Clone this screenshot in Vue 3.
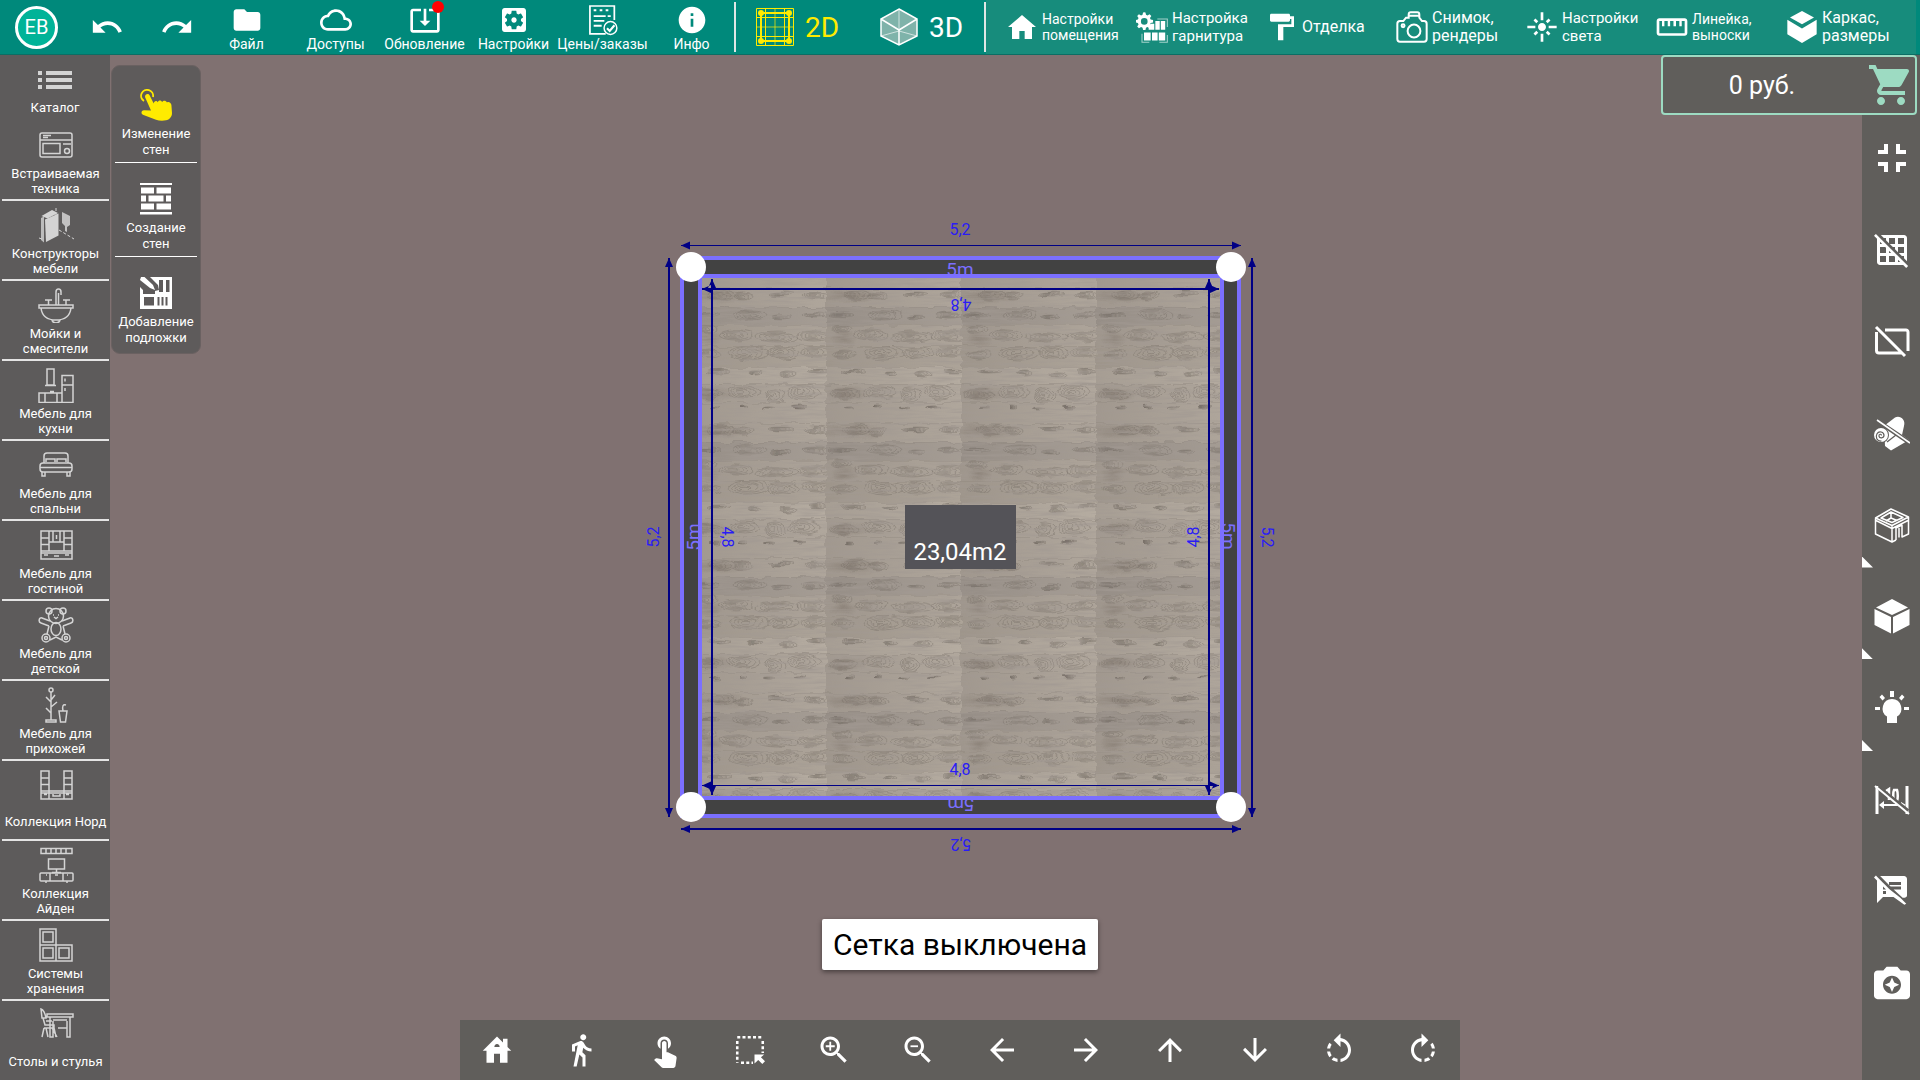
<script setup>
import { ref } from 'vue'

const fileActions = [
  { icon: 'folder', label: 'Файл' },
  { icon: 'cloud', label: 'Доступы' },
  { icon: 'update', label: 'Обновление', badge: true },
  { icon: 'settings', label: 'Настройки' },
  { icon: 'prices', label: 'Цены/заказы' },
  { icon: 'info', label: 'Инфо' },
]

const sections = [
  { icon: 'home', lines: ['Настройки', 'помещения'], size: 'small' },
  { icon: 'kitchenSet', lines: ['Настройка', 'гарнитура'], size: 'medium' },
  { icon: 'roller', lines: ['Отделка'], size: 'large' },
  { icon: 'camera', lines: ['Снимок,', 'рендеры'], size: 'large' },
  { icon: 'flare', lines: ['Настройки', 'света'], size: 'medium' },
  { icon: 'ruler', lines: ['Линейка,', 'выноски'], size: 'small' },
  { icon: 'carcass', lines: ['Каркас,', 'размеры'], size: 'large' },
]

const catalog = [
  { icon: 'oven', lines: ['Встраиваемая', 'техника'] },
  { icon: 'constructor', lines: ['Конструкторы', 'мебели'] },
  { icon: 'sink', lines: ['Мойки и', 'смесители'] },
  { icon: 'kitchen', lines: ['Мебель для', 'кухни'] },
  { icon: 'bed', lines: ['Мебель для', 'спальни'] },
  { icon: 'living', lines: ['Мебель для', 'гостиной'] },
  { icon: 'bear', lines: ['Мебель для', 'детской'] },
  { icon: 'hall', lines: ['Мебель для', 'прихожей'] },
  { icon: 'nord', lines: ['Коллекция Норд'] },
  { icon: 'aiden', lines: ['Коллекция', 'Айден'] },
  { icon: 'storage', lines: ['Системы', 'хранения'] },
  { icon: 'tables', lines: ['Столы и стулья'] },
]

const wallTools = [
  { icon: 'pointer', lines: ['Изменение', 'стен'], active: true },
  { icon: 'bricks', lines: ['Создание', 'стен'] },
  { icon: 'underlay', lines: ['Добавление', 'подложки'] },
]

const viewTools = [
  { icon: 'exitFull', label: 'Выйти из полного экрана' },
  { icon: 'gridOff', label: 'Сетка' },
  { icon: 'wallOff', label: 'Стены' },
  { icon: 'coverOff', label: 'Покрытия' },
  { icon: 'room', label: 'Комната', more: true },
  { icon: 'cube', label: 'Объекты', more: true },
  { icon: 'bulb', label: 'Свет', more: true },
  { icon: 'sizesOff', label: 'Размеры' },
  { icon: 'notesOff', label: 'Подписи' },
  { icon: 'photo', label: 'Фото' },
]

const moveTools = [
  { icon: 'house', label: 'Домой' },
  { icon: 'walk', label: 'Прогулка' },
  { icon: 'touch', label: 'Касание' },
  { icon: 'select', label: 'Выделение' },
  { icon: 'zoomIn', label: 'Приблизить' },
  { icon: 'zoomOut', label: 'Отдалить' },
  { icon: 'left', label: 'Влево' },
  { icon: 'right', label: 'Вправо' },
  { icon: 'up', label: 'Вверх' },
  { icon: 'down', label: 'Вниз' },
  { icon: 'rotateLeft', label: 'Повернуть влево' },
  { icon: 'rotateRight', label: 'Повернуть вправо' },
]

const mode = ref('2D')

const magnifier = '<path d="M15.5 14h-.79l-.28-.27C15.41 12.59 16 11.11 16 9.5 16 5.91 13.09 3 9.5 3S3 5.91 3 9.5 5.91 16 9.5 16c1.61 0 3.09-.59 4.23-1.57l.27.28v.79l5 4.99L20.49 19l-4.99-5zm-6 0C7.01 14 5 11.99 5 9.5S7.01 5 9.5 5 14 7.01 14 9.5 11.99 14 9.5 14z"/>'
const touchHand = '<path d="M9 11.24V7.5C9 6.12 10.12 5 11.5 5S14 6.12 14 7.5v3.74c1.21-.81 2-2.18 2-3.74C16 5.01 13.99 3 11.5 3S7 5.01 7 7.5c0 1.56.79 2.93 2 3.74z"/><path d="M18.84 15.87l-4.54-2.26c-.17-.07-.35-.11-.54-.11H13v-6c0-.83-.67-1.5-1.5-1.5S10 6.67 10 7.5v10.74l-3.43-.72c-.08-.01-.15-.03-.24-.03-.31 0-.59.13-.79.33l-.79.8 4.94 4.94c.27.27.65.44 1.06.44h6.79c.75 0 1.33-.55 1.44-1.28l.75-5.27c.01-.07.02-.14.02-.2 0-.62-.38-1.16-.91-1.38z"/>'

// Filled glyphs on a 24-unit grid
const glyphs = {
  undo: '<path d="M12.5 8c-2.65 0-5.05.99-6.9 2.6L2 7v9h9l-3.62-3.62c1.39-1.16 3.16-1.88 5.12-1.88 3.54 0 6.55 2.31 7.6 5.5l2.37-.78C21.08 11.03 17.15 8 12.5 8z"/>',
  redo: '<path d="M18.4 10.6C16.55 8.99 14.15 8 11.5 8c-4.65 0-8.58 3.03-9.96 7.22L3.9 16c1.05-3.19 4.05-5.5 7.6-5.5 1.95 0 3.73.72 5.12 1.88L13 16h9V7l-3.6 3.6z"/>',
  folder: '<path d="M10 4H4c-1.1 0-1.99.9-1.99 2L2 18c0 1.1.9 2 2 2h16c1.1 0 2-.9 2-2V8c0-1.1-.9-2-2-2h-8l-2-2z"/>',
  cloud: '<path d="M19.35 10.04C18.67 6.59 15.64 4 12 4 9.11 4 6.6 5.64 5.35 8.04 2.34 8.36 0 10.91 0 14c0 3.31 2.69 6 6 6h13c2.76 0 5-2.24 5-5 0-2.64-2.05-4.78-4.65-4.96zM19 18H6c-2.21 0-4-1.79-4-4 0-2.05 1.53-3.76 3.56-3.97l1.07-.11.5-.95C8.08 7.14 9.94 6 12 6c2.62 0 4.88 1.86 5.39 4.43l.3 1.5 1.53.11c1.56.1 2.78 1.41 2.78 2.96 0 1.65-1.35 3-3 3z"/>',
  update: '<path d="M12 16.5l4-4h-3v-9h-2v9H8l4 4zm9-13h-6v1.99h6v14.03H3V5.49h6V3.5H3c-1.1 0-2 .9-2 2v14c0 1.1.9 2 2 2h18c1.1 0 2-.9 2-2v-14c0-1.1-.9-2-2-2z"/>',
  settings: '<path d="M12 10c-1.1 0-2 .9-2 2s.9 2 2 2 2-.9 2-2-.9-2-2-2zm7-7H5c-1.11 0-2 .9-2 2v14c0 1.1.89 2 2 2h14c1.11 0 2-.9 2-2V5c0-1.1-.89-2-2-2zm-1.75 9c0 .23-.02.46-.05.68l1.48 1.16c.13.11.17.3.08.45l-1.4 2.42c-.09.15-.27.21-.43.15l-1.74-.7c-.36.28-.76.51-1.18.69l-.26 1.85c-.03.17-.18.3-.35.3h-2.8c-.17 0-.32-.13-.35-.29l-.26-1.85c-.43-.18-.82-.41-1.18-.69l-1.74.7c-.16.06-.34 0-.43-.15l-1.4-2.42c-.09-.15-.05-.34.08-.45l1.48-1.16c-.03-.23-.05-.46-.05-.69 0-.23.02-.46.05-.68l-1.48-1.16c-.13-.11-.17-.3-.08-.45l1.4-2.42c.09-.15.27-.21.43-.15l1.74.7c.36-.28.76-.51 1.18-.69l.26-1.85c.03-.17.18-.3.35-.3h2.8c.17 0 .32.13.35.29l.26 1.85c.43.18.82.41 1.18.69l1.74-.7c.16-.06.34 0 .43.15l1.4 2.42c.09.15.05.34-.08.45l-1.48 1.16c.03.23.05.46.05.69z"/>',
  prices: '<path fill="none" stroke="currentColor" stroke-width="1.3" d="M14 22.4H2.2V1.5h18.3V12"/><path d="M5 4h2v1.4H5zM9.5 4h2v1.4h-2zM14 4h2v1.4h-2zM5 8.4h9v1.4H5zM5 12h8v1.4H5zM5 15.6h6V17H5zM15.5 8.4h2.3v1.4h-2.3z"/><circle cx="17.6" cy="18" r="4.8" fill="none" stroke="currentColor" stroke-width="1.1"/><path fill="none" stroke="currentColor" stroke-width="1.6" d="M15 18.2l2 2 3.6-4.3"/>',
  info: '<path d="M12 2C6.48 2 2 6.48 2 12s4.48 10 10 10 10-4.48 10-10S17.52 2 12 2zm1 15h-2v-6h2v6zm0-8h-2V7h2v2z"/>',
  home: '<path d="M10 21v-6h4v6h5.500v-9H22.500L12 3 1.500 12h3v9z"/>',
  kitchenSet: '<path fill-rule="evenodd" d="M6.2 1l.9.1.4 1.8 1.1.5 1.600-1 1.300 1.300-1 1.600.5 1.100 1.800.4v1.800l-1.800.4-.5 1.100 1 1.600-1.300 1.300-1.600-1-1.100.5-.4 1.800H5.300l-.4-1.800-1.100-.5-1.600 1L.9 11.700l1-1.600L1.400 9-.2 8.600V6.800L1.400 6.400l.5-1.100-1-1.600 1.300-1.300 1.600 1L4.900 2.900 5.300 1.100zM6.200 5.300a2.500 2.500 0 1 0 0 5 2.500 2.500 0 0 0 0-5z"/><path d="M11 9.500h2.700V14H9.500v-2.500zM14.500 7.500h3.300V14h-3.300zM18.600 7.500h3.300V14h-3.300zM6 16.200h5v6H6zM12 16.200h4.200v6H12zM17.100 16.200h4.800v6h-4.800z"/><path opacity=".6" fill="none" stroke="currentColor" stroke-width=".8" d="M16 6h7.500v6M23.500 18v5.500h-6M4.500 17v6.500H10"/>',
  roller: '<path d="M18 4V3c0-.55-.45-1-1-1H4c-.55 0-1 .45-1 1v4c0 .55.45 1 1 1h13c.55 0 1-.45 1-1V6h1v4H9v12h4v-10h8V4h-3z"/>',
  camera: '<g fill="none" stroke="currentColor" stroke-width="1.500"><path d="M3 7.500h2.500l2-2.500h2V2.800C9.500 1.800 10 1 11 1h5c1 0 1.500.8 1.500 1.800V5l2 2.500H21c1.200 0 2 .8 2 2V21c0 1.200-.8 2-2 2H3c-1.200 0-2-.8-2-2V9.500c0-1.200.8-2 2-2zM9.500 3.500h8"/><circle cx="13.500" cy="15" r="4.800"/><circle cx="5.300" cy="11" r="1.100"/></g>',
  flare: '<path d="M7 11H1v2h6v-2zm2.170-3.240L7.050 5.640 5.640 7.050l2.120 2.120 1.410-1.410zM13 1h-2v6h2V1zm5.360 6.050l-1.410-1.410-2.120 2.120 1.410 1.410 2.120-2.120zM17 11v2h6v-2h-6zm-5-2c-1.660 0-3 1.340-3 3s1.340 3 3 3 3-1.340 3-3-1.340-3-3-3zm2.830 7.240l2.120 2.120 1.410-1.410-2.120-2.120-1.410 1.410zm-9.190.71l1.410 1.410 2.120-2.120-1.410-1.410-2.120 2.120zM11 23h2v-6h-2v6z"/>',
  ruler: '<path d="M21.500 5.500h-19c-1.100 0-2 .9-2 2v9c0 1.100.9 2 2 2h19c1.100 0 2-.9 2-2v-9c0-1.100-.9-2-2-2zm0 11.200h-19V7.500h2v4h1.800v-4h2.500v4h1.800v-4h2.500v4H15v-4h2.500v4h1.800v-4h2.200v9.200z"/>',
  carcass: '<path d="M12 0L21 4.800 12 9.900 3 4.800zM1 6.600l11 6.500 11-6.500V17.500L12 24 1 17.500z"/>',
  cart: '<path d="M7 18c-1.100 0-1.990.9-1.990 2S5.900 22 7 22s2-.9 2-2-.9-2-2-2zM1 2v2h2l3.600 7.590-1.350 2.450c-.16.28-.25.61-.25.96 0 1.100.9 2 2 2h12v-2H7.420c-.14 0-.25-.11-.25-.25l.03-.12.9-1.630h7.450c.75 0 1.410-.41 1.750-1.030l3.580-6.490c.08-.14.12-.31.12-.48 0-.55-.45-1-1-1H5.210l-.94-2H1zm16 16c-1.100 0-1.990.9-1.990 2s.89 2 1.990 2 2-.9 2-2-.9-2-2-2z"/>',
  house: '<path fill-rule="evenodd" d="M2.500 12.500L12 3l4 4V4.500h3V10l2.500 2.500H19V20.500h-5v-6h-4v6H5v-8zM12 8a1.700 1.700 0 0 0-1.700 2h3.400A1.700 1.700 0 0 0 12 8z"/>',
  walk: '<path d="M13.500 5.500c1.100 0 2-.9 2-2s-.9-2-2-2-2 .9-2 2 .9 2 2 2zM9.800 8.900L7 23h2.100l1.800-8 2.100 2v6h2v-7.500l-2.100-2 .6-3C14.800 12 16.800 13 19 13v-2c-1.900 0-3.500-1-4.300-2.400l-1-1.600c-.4-.6-1-1-1.700-1-.3 0-.5.1-.8.1L6 8.300V13h2V9.600l1.800-.7"/>',
  touch: touchHand,
  select: '<path fill="none" stroke="currentColor" stroke-width="1.700" stroke-dasharray="2 1.500" d="M3.500 3.500h17.500M20.500 6v8M3.500 6v14.500M6 20.500h8"/><path d="M15 15h6.500l-2.200 1.800 2.700 2.700-1.800 1.800-2.700-2.700L15 21z"/>',
  zoomIn: magnifier + '<path d="M12.500 10.100h-2.400v2.400H8.900v-2.400H6.500V8.900h2.400V6.500h1.200v2.400h2.400z"/>',
  zoomOut: magnifier + '<path d="M7 8.900h5v1.200H7z"/>',
  left: '<path d="M20 11H7.830l5.590-5.590L12 4l-8 8 8 8 1.410-1.410L7.830 13H20v-2z"/>',
  right: '<path d="M12 4l-1.410 1.410L16.170 11H4v2h12.170l-5.580 5.590L12 20l8-8z"/>',
  up: '<path d="M4 12l1.410 1.410L11 7.830V20h2V7.830l5.580 5.590L20 12l-8-8-8 8z"/>',
  down: '<path d="M20 12l-1.410-1.410L13 16.170V4h-2v12.170l-5.580-5.590L4 12l8 8 8-8z"/>',
  rotateLeft: '<path d="M7.110 8.530L5.700 7.110C4.800 8.270 4.240 9.610 4.070 11h2.020c.14-.87.49-1.720 1.020-2.470zM6.090 13H4.070c.17 1.390.72 2.730 1.620 3.890l1.410-1.420c-.52-.75-.87-1.590-1.010-2.470zm1.010 5.320c1.160.9 2.510 1.440 3.900 1.610V17.900c-.87-.15-1.710-.49-2.460-1.030L7.100 18.320zM13 4.070V1L8.450 5.550 13 10V6.090c2.840.48 5 2.940 5 5.910s-2.160 5.430-5 5.910v2.020c3.950-.49 7-3.850 7-7.930s-3.050-7.440-7-7.930z"/>',
  rotateRight: '<path d="M15.550 5.550L11 1v3.070C7.060 4.560 4 7.920 4 12s3.050 7.440 7 7.930v-2.020c-2.840-.48-5-2.940-5-5.910s2.160-5.430 5-5.910V10l4.550-4.450zM19.930 11c-.17-1.390-.72-2.730-1.620-3.890l-1.420 1.420c.54.75.88 1.600 1.020 2.470h2.020zM13 17.900v2.020c1.390-.17 2.740-.71 3.900-1.610l-1.440-1.440c-.75.54-1.590.89-2.460 1.030zm3.890-2.420l1.420 1.410c.9-1.160 1.450-2.500 1.620-3.890h-2.020c-.14.88-.48 1.720-1.020 2.480z"/>',
}

// Catalogue line drawings on a 36-unit grid
const drawings = {
  list: '<g fill="currentColor" stroke="none"><path d="M1 9h4v4H1zM1 16h4v4H1zM1 23h4v4H1zM9 9h26v4H9zM9 16h26v4H9zM9 23h26v4H9z"/></g>',
  oven: '<rect x="2" y="6" width="32" height="24" rx="2"/><path d="M2 13h32M5 8.500h8M5 10.500h5M25 17h8"/><rect x="5" y="16.500" width="17" height="10"/><circle cx="29" cy="24" r="2.500"/>',
  constructor: '<g fill="currentColor" stroke="none"><path d="M3 11l3-1.500v26L3 33z" opacity=".8"/><path d="M3.500 9L14 3l6 3-10.500 5.500z"/><path d="M7 12.500l13.500-6v22L8 35z"/><path d="M24 5l8 4v9l-3 2v5l-2-1v-5l-3-3z" opacity=".85"/></g><path stroke-width="1" stroke-dasharray="3 2" d="M18 1v7M1 31l3 1M21 23l15 9"/>',
  sink: '<path d="M1 18h34v3H1zM3 21c1 8 6 12 15 12s14-4 15-12M18 18V5c0-4 5-4 5 0v3M20.500 18V6M7 13h7M10.500 13v5M25 13h7M28 13v5M14 33c1 4 7 4 8 0"/>',
  kitchen: '<path d="M9 2h7v16H9zM7 18.500h11M24 8.500h11v27H24zM24 18h11M27 11.500v3M27 21v3M1 26h23v9.500H1zM7 26v9M19 26v9M12 24.500h4"/>',
  bed: '<path d="M6 16V9c0-2 1-3 3-3h18c2 0 3 1 3 3v7M8 15v-3h9v3M19 15v-3h9v3"/><rect x="2" y="16" width="32" height="9" rx="3"/><path d="M2 20.500h32M4 25v4h3v-4M29 25v4h3v-4"/>',
  living: '<path d="M3 4h31v28H3zM11 4v20M26 4v20M3 11h8M3 17.500h8M26 11h8M26 17.500h8M11 15h15M3 24h31M3 26h31M15 4v11M22 4v11M18.500 8v4M6 28h4M27 28h4M16 29h5"/>',
  bear: '<circle cx="18" cy="9" r="7.500"/><circle cx="11" cy="4" r="3"/><circle cx="25" cy="4" r="3"/><path d="M12 14L4 11c-3-1-4 4-1 5l8 3M24 14l8-3c3-1 4 4 1 5l-8 3M11 19l-2 8M25 19l2 8M16 10l2 1.500 2-1.500M15 8h1M20 8h1"/><ellipse cx="18" cy="22" rx="5" ry="6.500"/><circle cx="8" cy="31" r="4"/><circle cx="28" cy="31" r="4"/><circle cx="8" cy="31" r="1.500"/><circle cx="28" cy="31" r="1.500"/><path d="M12 33l6-3 6 3"/>',
  hall: '<circle cx="13" cy="3" r="2"/><path d="M13 5v28M13 15l-5-5M13 13l4-5M13 20l6-5M13 26l-5-5M8 33h10v2H8zM21 24h8l-1.500 11h-5zM25 24c-1-5 0-7 3-6"/>',
  nord: '<path d="M3 4h8v28H3zM26 4h8v28h-8zM3 11h8M3 17.500h8M26 11h8M26 17.500h8M3 24h31M3 26h31M11 32h15M15 27v2h7v-2M6 27.500h3M28 27.500h3"/>',
  aiden: '<path d="M3 1.500h31v5H3zM8 1.500v5M13 1.500v5M18 1.500v5M23 1.500v5M28 1.500v5M10.500 12h16v10h-16zM18.500 22v4M14 25.500h9"/><rect x="2" y="26" width="33" height="8" rx="1"/><path d="M12 26v8M25 26v8M17 28h3M8 28h1M29 28h1M8 34v2M29 34v2"/>',
  storage: '<path d="M2 2h16v16H2zM2 18h16v16H2zM18 18h16v16H18z"/><path d="M5 5h10v10H5zM5 21h10v10H5zM21 21h10v10H21z"/>',
  tables: '<path d="M9 7h26v3H9zM12 10v20h3V14M32 10v20h-3V14M15 13h14M3 2c3 1 4 4 5 9h-4zM5 11l2 7h9v3H6M6 21L4 30M8 21l2 9M14 21l5 9M16 21l2 9M8 14h6M20 21h9"/>',
}

// Right-hand rail drawings on a 36-unit grid
const railIcons = {
  exitFull: '<path d="M4 22h10v10h-4v-6H4zM10 4h4v10H4v-4h6zM22 22h10v4h-6v6h-4zM22 4h4v6h6v4H22z"/>',
  gridOff: '<g transform="scale(1.500)"><path d="M8 4v1.450l2 2V4h4v4h-3.450l2 2H14v1.450l2 2V10h4v4h-3.450l2 2H20v1.450l2 2V4c0-1.100-.9-2-2-2H4.550l2 2H8zm8 0h4v4h-4V4zM1.270 1.270L0 2.550l2 2V20c0 1.100.9 2 2 2h15.460l2 2 1.270-1.270L1.270 1.270zM10 12.550L11.450 14H10v-1.450zm-6-6L5.450 8H4V6.550zM8 20H4v-4h4v4zm0-6H4v-4h3.450l.55.55V14zm6 6h-4v-4h3.450l.55.54V20zm2 0v-1.460L17.460 20H16z"/></g>',
  wallOff: '<path fill="none" stroke="currentColor" stroke-width="3" d="M11 7h21c1 0 2 1 2 2v19M28 30H5c-2 0-2.500-1-2.500-2.500V9M2 4l29 29"/>',
  coverOff: '<path d="M10 11L21 2.500c5-2.500 11 2 9 8.500l-2 9L35 25 17 35.500l-6-4.500z"/><circle cx="7" cy="20" r="8" fill="#605e5b"/><circle cx="7" cy="20" r="7"/><path fill="none" stroke="#605e5b" stroke-width="1.200" d="M7.500 20.500c0-2-3-1.500-2.500.8s5 2.200 5-1-5-5-7-1.500 0 7.700 4.500 7.200"/><path fill="none" stroke="#605e5b" stroke-width="1.300" d="M13 27l9-7"/><path fill="none" stroke="#605e5b" stroke-width="4.500" d="M8 9l28 19"/><path fill="none" stroke="currentColor" stroke-width="1.600" d="M3 5l33 23"/>',
  room: '<path fill="none" stroke="currentColor" stroke-width="1.500" stroke-linejoin="round" d="M1.500 11L17 2l17.500 8L18 18.500zM7 11l10-6 12 5.500-11 5zM17 5v6l-5 3M17 11l6 2.500M1.500 11v16L18 35l4-2M18 18.500V35M22 33V21l6-3v12l6.500-3V10M25 30.500V21M2 13.500l16 8 16-8"/>',
  cube: '<path d="M18 1l16 8.500L18 17 2 9.500zM.5 11L17 19v16.500L.5 27zM35.500 11L19 19v16.500L35.500 27z"/>',
  bulb: '<path d="M16 1h4v6h-4zM1 17h5v3H1zM30 17h5v3h-5zM5.500 7L8 4.500 11 8l-2.500 2.500zM30.500 7L28 4.500 25 8l2.500 2.500z"/><path d="M18 9a9.500 9.500 0 0 0-5 17.500V33h10v-6.500A9.500 9.500 0 0 0 18 9z"/>',
  sizesOff: '<path d="M1.500 4v28h3V4zM31.500 4v28h3V4z"/><path d="M5 23l5-4v3h14v2H10v3zM27 20l5 3-5 3z"/><path fill="none" stroke="currentColor" stroke-width="2.500" d="M12 9l3-2v11M20 8c-1 2-1 8 0 11h3c1-2 1-8 0-11z"/><path stroke="#605e5b" stroke-width="4" d="M4 5l30 24"/><path stroke="currentColor" stroke-width="2" d="M1 4l34 28"/>',
  notesOff: '<g transform="scale(1.500)"><path d="M10.540 11l-.54-.54L7.540 8 6 6.460 2.380 2.840 1.270 1.730 0 3l2.010 2.010L2 20l4-4h7l7.230 5.230L21.500 20.460 17.540 16.500l-7-5.500zM8 14H6v-2h2v2zm-2-3V9l2 2H6zm14-9H4.080L10 7.920V6h8v2h-7.920l1 1H18v2h-4.920l5.990 5.500C21.140 16.500 22 16.080 22 15V4c0-1.100-.9-2-2-2z"/></g>',
  photo: '<g transform="translate(-3.600 -3.600) scale(1.800)"><path d="M9 3L7.170 5H4c-1.100 0-2 .9-2 2v12c0 1.100.9 2 2 2h16c1.100 0 2-.9 2-2V7c0-1.100-.9-2-2-2h-3.170L15 3H9zm3 15c-2.760 0-5-2.240-5-5s2.240-5 5-5 5 2.240 5 5-2.240 5-5 5zm0-1l1.250-2.750L16 13l-2.750-1.250L12 9l-1.250 2.750L8 13l2.750 1.250z"/></g>',
}

// Wall tool drawings on a 32-unit grid
const wallIcons = {
  pointer: '<path fill="none" stroke="currentColor" stroke-width="1.800" d="M4 12a6 6 0 1 1 9-4"/><path d="M5.200 8.500c-1-3.200 3-4.800 4.500-2l4 8c.2-2.500 3-3.300 4-1.200.8-2.400 3.500-2.500 4.500-.3 1.200-2 3.800-1.500 4.800.4 2-1.200 4 .6 4.400 2.600l.6 8c0 4-2.500 6.500-6 7.300-3 .8-7 .6-10-.5L3.500 26c-3-1.500-2.500-4.500.5-4.800l7 .3z"/>',
  bricks: '<path d="M0 0h32v2H0zM1 4.500h13v6H1zM16.500 4.500H31v6H16.500zM1 12.500h5v6H1zM8.500 12.500h15v6h-15zM26 12.500h5v6h-5zM1 20.500h13v6H1zM16.500 20.500H31v6H16.500zM0 29h32v2.500H0z"/>',
  underlay: '<path fill-rule="evenodd" d="M10 0H32V32H0V10l3 3v4h12v-3l4-1-1-5-6-6zM19 3v12h4V3zM26 3v12h3.500V3zM4 20v8.500h10V20zM17.500 20v8.500h2V20zM21.500 20v8.500h2V20zM25.500 20v8.500h2V20z"/><path d="M1 0L4-.5 13 8l2 5-5-2L0 3z"/>',
}

// Laminate tile: seven planks with flattened growth rings around the knots
const planks = [
  { y: 0, h: 21, fill: '#a9a096', knots: [[20, 6, 5, 1], [48, 5, 4, 1], [74, 6, 6, 1], [104, 5, 7, 1]] },
  { y: 21, h: 19, fill: '#a89f95', shade: [14, 8, 38], knots: [[26, 7, 14, 5], [48, 8, 10, 4], [86, 6, 13, 2], [121, 7, 12, 3]] },
  { y: 40, h: 18, fill: '#9a928b', knots: [[12, 8, 13, 2], [55, 8, 17, 5], [86, 10, 9, 2], [120, 8, 13, 3]] },
  { y: 58, h: 21, fill: '#a69d93', shade: [6, 14, 14], knots: [[12, 4, 10, 4], [41, 10, 17, 5], [82, 12, 21, 5], [120, 11, 18, 5]] },
  { y: 79, h: 21, fill: '#a59c91', knots: [[14, 8, 12, 4], [54, 7, 20, 7], [88, 7, 16, 6], [122, 6, 16, 5]] },
  { y: 100, h: 17, fill: '#b1a89d', knots: [[24, 5, 12, 2], [60, 6, 7, 2], [93, 7, 9, 3], [124, 4, 11, 2]] },
  { y: 117, h: 18, fill: '#aaa197', shade: [8, 10, 24], knots: [[14, 10, 15, 5], [49, 8, 16, 6], [80, 11, 10, 7], [109, 8, 16, 7]] },
]

const corners = [[691, 267], [1231, 267], [691, 807], [1231, 807]]

// Dimension lines: start, end, stroke width
const spans = [
  { from: [681, 245.5], to: [1241, 245.5], w: 1 },
  { from: [681, 829], to: [1241, 829], w: 2 },
  { from: [669, 258], to: [669, 817], w: 2 },
  { from: [1252, 258], to: [1252, 817], w: 2 },
  { from: [702, 289], to: [1219, 289], w: 2 },
  { from: [702, 785.5], to: [1219, 785.5], w: 1 },
  { from: [712, 279], to: [712, 795], w: 2 },
  { from: [1209, 279], to: [1209, 795], w: 2 },
]

const heads = spans.map(({ from: [x1, y1], to: [x2, y2] }) =>
  y1 === y2
    ? `M${x1} ${y1}l9-4v8zM${x2} ${y2}l-9-4v8z`
    : `M${x1} ${y1}l-4 9h8zM${x2} ${y2}l-4-9h8z`,
).join('')

const sizes = [
  { text: '5,2', x: 960, y: 229, turn: 0 },
  { text: '4,8', x: 961, y: 305, turn: 180 },
  { text: '4,8', x: 960, y: 769, turn: 0 },
  { text: '5,2', x: 961, y: 845, turn: 180 },
  { text: '5,2', x: 653, y: 537, turn: -90 },
  { text: '4,8', x: 728, y: 537, turn: 90 },
  { text: '4,8', x: 1193, y: 537, turn: -90 },
  { text: '5,2', x: 1268, y: 537, turn: 90 },
]

const wallSizes = [
  { x: 960, y: 269, turn: 0 },
  { x: 961, y: 805, turn: 180 },
  { x: 693, y: 537, turn: -90 },
  { x: 1229, y: 536, turn: 90 },
]
</script>

<template>
  <div class="planner">
    <header class="topbar">
      <div class="account">
        <button class="avatar" type="button">EB</button>
        <button class="history" type="button" aria-label="Отменить"><svg viewBox="0 0 24 24" v-html="glyphs.undo" /></button>
        <button class="history" type="button" aria-label="Повторить"><svg viewBox="0 0 24 24" v-html="glyphs.redo" /></button>
      </div>
      <nav class="file-actions">
        <button v-for="a in fileActions" :key="a.label" class="file-action" type="button">
          <span class="file-icon">
            <svg viewBox="0 0 24 24" v-html="glyphs[a.icon]" />
            <i v-if="a.badge" class="badge"></i>
          </span>
          <span>{{ a.label }}</span>
        </button>
      </nav>
      <div class="modes">
        <button class="mode" :class="{ active: mode === '2D' }" type="button" @click="mode = '2D'">
          <svg viewBox="0 0 38 38">
            <g fill="none" stroke="currentColor">
              <path stroke-width="1" d="M.5.500h37v37H.5zM9.500 0v38M28.500 0v38M0 9.500h38M0 28.500h38" />
              <path stroke-width="1" opacity=".7" d="M19 0v38M0 19h38" />
              <path stroke-width="2" d="M5 5h28v28H5z" />
            </g>
            <circle cx="5" cy="5" r="3" /><circle cx="33" cy="5" r="3" /><circle cx="5" cy="33" r="3" /><circle cx="33" cy="33" r="3" />
          </svg>
          <span>2D</span>
        </button>
        <button class="mode" :class="{ active: mode === '3D' }" type="button" @click="mode = '3D'">
          <svg viewBox="0 0 38 38">
            <path fill="#7fb3aa" d="M19 1l18 10v17L19 37 1 28V11z" />
            <path fill="none" stroke="currentColor" stroke-width=".8" opacity=".8" d="M19 1v22M1 28l18-5 18 5" />
            <path fill="none" stroke="currentColor" stroke-width="1.500" d="M19 1l18 10v17L19 37 1 28V11zM1 11l18 11 18-11M19 22v15" />
          </svg>
          <span>3D</span>
        </button>
      </div>
      <nav class="sections">
        <button v-for="s in sections" :key="s.icon" class="section" :class="s.size" type="button">
          <svg viewBox="0 0 24 24" v-html="glyphs[s.icon]" />
          <span><template v-for="(l, i) in s.lines" :key="l"><br v-if="i" />{{ l }}</template></span>
        </button>
      </nav>
    </header>

    <div class="body">
      <main class="canvas">
        <div class="stage">
          <svg class="plan" viewBox="640 210 640 655" role="img" aria-label="План комнаты">
            <defs>
              <pattern id="laminate" x="691" y="267" width="135" height="135" patternUnits="userSpaceOnUse">
                <svg v-for="p in planks" :key="p.y" x="0" :y="p.y" width="135" :height="p.h">
                  <rect width="135" :height="p.h" :fill="p.fill" />
                  <rect width="135" :height="p.h" fill="url(#plankLight)" />
                  <ellipse v-if="p.shade" :cx="p.shade[0] + 12" :cy="p.shade[1]" :rx="p.shade[2]" ry="8" fill="url(#knotShade)" />
                  <g fill="none" stroke="#6f665e" stroke-width=".7" stroke-opacity=".55">
                    <template v-for="(k, i) in p.knots" :key="i">
                      <ellipse v-for="n in 4" :key="n" :cx="k[0] + n" :cy="k[1]" :rx="k[2] * n / 4" :ry="k[3] * n / 4" />
                    </template>
                  </g>
                  <path d="M0 .5h135" stroke="#8d847b" stroke-opacity=".35" />
                </svg>
              </pattern>
              <linearGradient id="plankLight">
                <stop offset="0" stop-color="#8d857d" stop-opacity=".3" />
                <stop offset="1" stop-color="#beb5a9" stop-opacity=".3" />
              </linearGradient>
              <radialGradient id="knotShade">
                <stop offset="0" stop-color="#81776e" stop-opacity=".6" />
                <stop offset="1" stop-color="#81776e" stop-opacity="0" />
              </radialGradient>
              <filter id="wobble" x="0" y="0" width="1" height="1" color-interpolation-filters="sRGB">
                <feTurbulence type="fractalNoise" baseFrequency=".06 .14" numOctaves="2" seed="9" result="noise" />
                <feDisplacementMap in="SourceGraphic" in2="noise" scale="7" xChannelSelector="G" yChannelSelector="R" />
              </filter>
              <filter id="grain" x="0" y="0" width="1" height="1">
                <feTurbulence type="fractalNoise" baseFrequency=".03 .35" numOctaves="3" seed="4" />
                <feColorMatrix values="0 0 0 0 .36  0 0 0 0 .32  0 0 0 0 .29  1.800 0 0 0 -.75" />
              </filter>
              <clipPath id="wallFaces"><path d="M684 260h554v554H684zM698 274v526h526V274z" clip-rule="evenodd" /></clipPath>
            </defs>
            <rect x="694" y="270" width="534" height="534" fill="url(#laminate)" filter="url(#wobble)" />
            <rect x="700" y="276" width="522" height="522" filter="url(#grain)" />
            <path class="wall" fill-rule="evenodd" d="M682 258h557v558H682zM700 276v522h522V276z" />
            <g clip-path="url(#wallFaces)">
              <text v-for="s in wallSizes" :key="s.turn" class="wall-size" :transform="`translate(${s.x} ${s.y}) rotate(${s.turn})`" y="7">5m</text>
            </g>
            <line v-for="(s, i) in spans" :key="i" class="span" :x1="s.from[0]" :y1="s.from[1]" :x2="s.to[0]" :y2="s.to[1]" :stroke-width="s.w" />
            <path class="heads" :d="heads" />
            <text v-for="s in sizes" :key="`${s.x}-${s.y}`" class="size" :transform="`translate(${s.x} ${s.y}) rotate(${s.turn})`" y="6">{{ s.text }}</text>
            <circle v-for="c in corners" :key="c.join()" class="corner" :cx="c[0]" :cy="c[1]" r="15" />
            <rect x="905" y="505" width="111" height="64" fill="#545358" />
            <text class="area" x="960" y="560">23,04m2</text>
          </svg>
          <div class="toast" role="status">Сетка выключена</div>
        </div>
        <div class="move-bar">
          <button v-for="t in moveTools" :key="t.icon" type="button" :aria-label="t.label">
            <svg viewBox="0 0 24 24" v-html="glyphs[t.icon]" />
          </button>
        </div>
      </main>

      <nav class="catalog">
        <button class="catalog-head" type="button">
          <svg class="drawing" viewBox="0 0 36 36" v-html="drawings.list" />
          <span>Каталог</span>
        </button>
        <button v-for="c in catalog" :key="c.icon" class="catalog-item" type="button">
          <svg class="drawing" viewBox="0 0 36 36" v-html="drawings[c.icon]" />
          <span class="caption"><span><template v-for="(l, i) in c.lines" :key="l"><br v-if="i" />{{ l }}</template></span></span>
        </button>
      </nav>

      <aside class="wall-tools">
        <button v-for="t in wallTools" :key="t.icon" class="wall-tool" type="button">
          <svg :class="{ active: t.active }" viewBox="0 0 32 32" v-html="wallIcons[t.icon]" />
          <span><template v-for="(l, i) in t.lines" :key="l"><br v-if="i" />{{ l }}</template></span>
        </button>
      </aside>

      <aside class="rail">
        <button v-for="t in viewTools" :key="t.icon" type="button" :aria-label="t.label">
          <svg viewBox="0 0 36 36" v-html="railIcons[t.icon]" />
          <i v-if="t.more" class="more"></i>
        </button>
      </aside>

      <button class="cart" type="button">
        <span>0 руб.</span>
        <svg viewBox="0 0 24 24" v-html="glyphs.cart" />
      </button>
    </div>
  </div>
</template>

<style>
body {
  margin: 0;
  background: #807171;
}
</style>

<style scoped>
.planner {
  display: flex;
  flex-direction: column;
  min-height: 100vh;
  font-family: Roboto, "Liberation Sans", sans-serif;
  color: #fff;
  background: #807171;
}
button {
  margin: 0;
  padding: 0;
  border: 0;
  background: none;
  color: inherit;
  font: inherit;
  cursor: pointer;
}
svg {
  display: block;
  flex: none;
  fill: currentColor;
}

.topbar {
  display: flex;
  box-sizing: border-box;
  height: 55px;
  background: #00897b;
  border-bottom: 1px solid #0b6e64;
}
.account {
  display: flex;
  align-items: center;
  padding-left: 15px;
}
.avatar {
  box-sizing: border-box;
  width: 43px;
  height: 43px;
  margin-right: 25px;
  border: 3px solid #fff;
  border-radius: 50%;
  background: #00b398;
  font-size: 20px;
}
.history {
  width: 48px;
  display: flex;
  justify-content: center;
}
.history + .history {
  margin-left: 22px;
}
.history svg {
  width: 34px;
  height: 34px;
}
.file-actions {
  display: flex;
  padding-left: 1px;
}
.file-action {
  display: flex;
  flex-direction: column;
  align-items: center;
  width: 89px;
  padding-top: 4px;
  font-size: 14px;
  line-height: 16px;
  white-space: nowrap;
}
.file-icon {
  position: relative;
}
.file-icon svg {
  width: 32px;
  height: 32px;
}
.badge {
  position: absolute;
  top: -3px;
  right: -3px;
  width: 12px;
  height: 12px;
  border-radius: 50%;
  background: #f00;
}
.modes {
  display: flex;
  margin: 2px 0 2px -2px;
  border: solid #dfe7e5;
  border-width: 0 2px;
}
.mode {
  display: flex;
  align-items: center;
  gap: 11px;
  width: 124px;
  padding-left: 20px;
  font-size: 28px;
}
.mode.active {
  color: #ffeb00;
}
.mode svg {
  width: 38px;
  height: 38px;
}
.sections {
  display: flex;
  flex: 1;
  padding-left: 20px;
  margin-right: 15px;
  background: #178c7c;
}
.section {
  display: flex;
  align-items: center;
  gap: 4px;
  width: 130px;
  text-align: left;
  white-space: nowrap;
}
.section svg {
  width: 32px;
  height: 32px;
}
.small {
  font-size: 14px;
  line-height: 16px;
}
.medium {
  font-size: 15px;
  line-height: 18px;
}
.large {
  font-size: 16px;
  line-height: 18px;
}

.body {
  position: relative;
  flex: 1;
  display: grid;
  grid-template-columns: 110px 1fr 58px;
}
.canvas {
  grid-area: 1 / 1 / 2 / -1;
  display: flex;
  flex-direction: column;
  align-items: center;
}
.stage {
  position: relative;
  flex: 1;
  width: 100%;
  display: flex;
  align-items: center;
  justify-content: center;
}
.plan {
  width: 640px;
  height: 655px;
}
.wall {
  fill: #424242;
  stroke: #7b6fff;
  stroke-width: 4px;
}
.wall-size,
.size,
.area {
  text-anchor: middle;
}
.wall-size {
  font-size: 19px;
  fill: #7b6fff;
}
.span {
  stroke: #000085;
}
.heads {
  fill: #000085;
}
.size {
  font-size: 16px;
  fill: #2a1cf5;
}
.corner {
  fill: #fff;
}
.area {
  font-size: 24px;
  fill: #fff;
}
.toast {
  position: absolute;
  bottom: 50px;
  padding: 8px 11px;
  border-radius: 2px;
  background: #fff;
  box-shadow: 0 2px 5px rgba(0, 0, 0, 0.45);
  color: #000;
  font-size: 30px;
  line-height: 35px;
}
.move-bar {
  box-sizing: border-box;
  display: flex;
  align-items: center;
  justify-content: space-between;
  width: 1000px;
  height: 60px;
  padding: 0 19px;
  background: #605e5b;
}
.move-bar svg {
  width: 36px;
  height: 36px;
}

.catalog {
  grid-area: 1 / 1;
  z-index: 1;
  background: #5d5b5b;
  font-size: 13px;
  line-height: 15px;
}
.catalog-head {
  box-sizing: border-box;
  display: flex;
  flex-direction: column;
  align-items: center;
  gap: 2px;
  width: 100%;
  height: 64px;
  padding-top: 7px;
}
.drawing {
  width: 36px;
  height: 36px;
  color: #d4d4d4;
}
.catalog-item .drawing {
  fill: none;
  stroke: currentColor;
  stroke-width: 1.5px;
}
.catalog-item {
  box-sizing: border-box;
  display: flex;
  flex-direction: column;
  align-items: center;
  width: 107px;
  height: 80px;
  margin-left: 2px;
  padding-top: 6px;
  border-top: 2px solid #e4e4e4;
  white-space: nowrap;
}
.catalog-head + .catalog-item {
  border-top-color: transparent;
}
.caption {
  display: flex;
  align-items: center;
  height: 39px;
}

.wall-tools {
  grid-area: 1 / 2;
  align-self: start;
  justify-self: start;
  z-index: 1;
  margin: 10px 0 0 1px;
  padding: 3px;
  border: 1px solid #6a6161;
  border-radius: 9px;
  background: #5e5b5b;
}
.wall-tool {
  display: flex;
  flex-direction: column;
  align-items: center;
  gap: 5px;
  width: 82px;
  padding: 20px 0 4px;
  font-size: 13px;
  line-height: 16px;
}
.wall-tool + .wall-tool {
  border-top: 1px solid #fff;
}
.wall-tool svg {
  width: 32px;
  height: 32px;
}
.active {
  color: #ffeb00;
}

.rail {
  grid-area: 1 / 3;
  z-index: 1;
  display: flex;
  flex-direction: column;
  padding: 57px 0 51px;
  background: #605e5b;
}
.rail button {
  position: relative;
  flex: 1;
  display: flex;
  align-items: center;
  justify-content: center;
  padding-left: 2px;
}
.rail svg {
  width: 36px;
  height: 36px;
}
.more {
  position: absolute;
  left: 0;
  bottom: 3px;
  width: 11px;
  height: 11px;
  background: #fff;
  clip-path: polygon(0 0, 100% 100%, 0 100%);
}
.cart {
  position: absolute;
  z-index: 2;
  top: 0;
  right: 3px;
  box-sizing: border-box;
  display: flex;
  align-items: center;
  width: 256px;
  height: 60px;
  border: 2px solid #9ddbc2;
  border-radius: 4px;
  background: #605e5b;
  font-size: 25px;
}
.cart span {
  flex: 1;
  padding-right: 6px;
}
.cart svg {
  width: 48px;
  height: 48px;
  color: #9ddbc2;
}
</style>
